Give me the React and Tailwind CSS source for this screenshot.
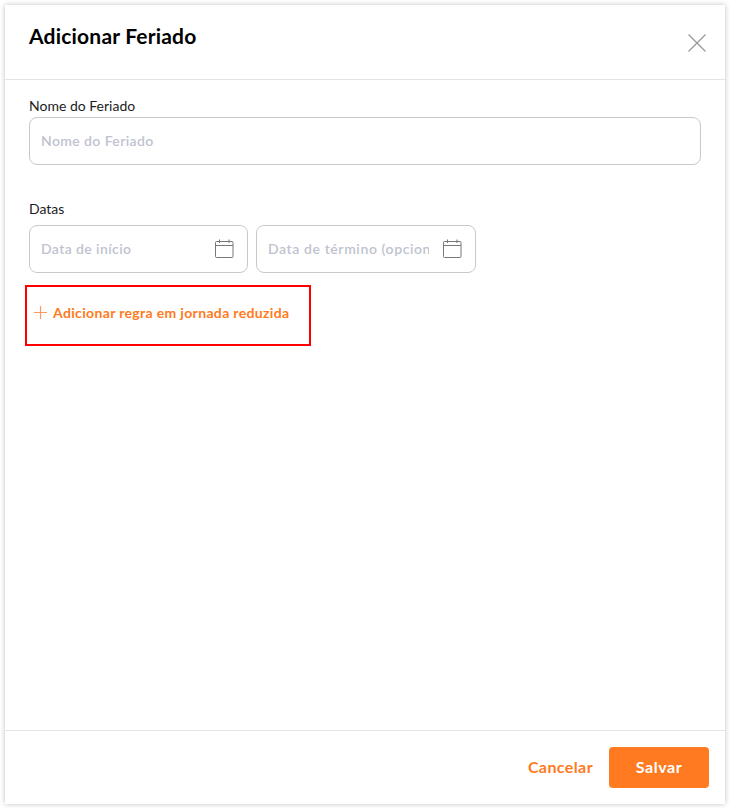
import React from 'react';

const CalendarIcon = () => (
    <svg width="20" height="20" viewBox="0 0 20 20" fill="none" stroke="#77777c" strokeWidth="1" className="shrink-0">
        <rect x="1.5" y="2.5" width="17.5" height="16" rx="1" />
        <path d="M1.5 6.5H19M5.5 0.5V4M15 0.5V4" />
    </svg>
);

const DateInput = ({ placeholder, className }) => (
    <div className={`flex items-center h-12 pl-[11px] pr-[13px] gap-[13px] border border-[#c9c9cc] rounded-lg ${className}`}>
        <input
            placeholder={placeholder}
            className="flex-1 min-w-0 text-sm font-semibold tracking-[inherit] outline-none placeholder:text-[#c0c3cf]"
        />
        <CalendarIcon />
    </div>
);

const App = () => {
    return (
        <div className="w-[730px] h-[809px] p-[5px] bg-white font-['Lato','Open_Sans',sans-serif]">
            <div className="flex flex-col h-[799px] w-[720px] bg-white shadow-[0_0_5px_rgba(0,0,0,0.25)]">
                {/* Header */}
                <div className="flex justify-between shrink-0 h-[75px] pl-6 pr-[19px] border-b border-[#e4e4e4]">
                    <h1 className="mt-[17px] text-[21px] leading-7 font-bold tracking-[0.2px] text-black">Adicionar Feriado</h1>
                    <button className="mt-[29px] self-start">
                        <svg width="18" height="18" viewBox="0 0 18 18" stroke="#98989a" strokeWidth="1.2" fill="none">
                            <path d="M0.5 0.5L17.5 17.5M17.5 0.5L0.5 17.5" />
                        </svg>
                    </button>
                </div>

                {/* Body */}
                <div className="flex-1 pl-6 pr-6 pt-4">
                    <label className="block text-sm leading-5 text-[#1c1c1c]">Nome do Feriado</label>
                    <input
                        placeholder="Nome do Feriado"
                        className="block w-full h-12 mt-[1px] px-[11px] pb-[2px] border border-[#c9c9cc] rounded-lg text-sm font-semibold tracking-[0.4px] outline-none placeholder:text-[#c0c3cf]"
                    />

                    <label className="block mt-[34px] text-sm leading-5 text-[#1c1c1c]">Datas</label>
                    <div className="flex gap-2 mt-[6px]">
                        <DateInput placeholder="Data de início" className="w-[219px] tracking-[0.4px]" />
                        <DateInput placeholder="Data de término (opcional)" className="w-[220px] tracking-[0.6px]" />
                    </div>

                    <div className="flex items-center w-[286px] h-[61px] mt-3 -ml-1 pl-[7px] pb-[6px] border-2 border-[#ff0000]">
                        <button className="flex items-center gap-[6px] text-sm font-bold tracking-[0.34px] text-[#ff7a21]">
                            <svg width="13" height="13" viewBox="0 0 13 13" stroke="#ff9a5c" strokeWidth="1.2" fill="none">
                                <path d="M6.5 0V13M0 6.5H13" />
                            </svg>
                            Adicionar regra em jornada reduzida
                        </button>
                    </div>
                </div>

                {/* Footer */}
                <div className="flex items-start justify-end shrink-0 h-[74px] pt-4 pr-4 gap-4 border-t border-[#e4e4e4]">
                    <button className="h-[39px] text-base font-bold tracking-[0.4px] text-[#ff7a21]">Cancelar</button>
                    <button className="w-[100px] h-[41px] pb-[2px] rounded bg-[#ff7a21] text-base font-bold tracking-[0.6px] text-white">Salvar</button>
                </div>
            </div>
        </div>
    );
};

export default App;
